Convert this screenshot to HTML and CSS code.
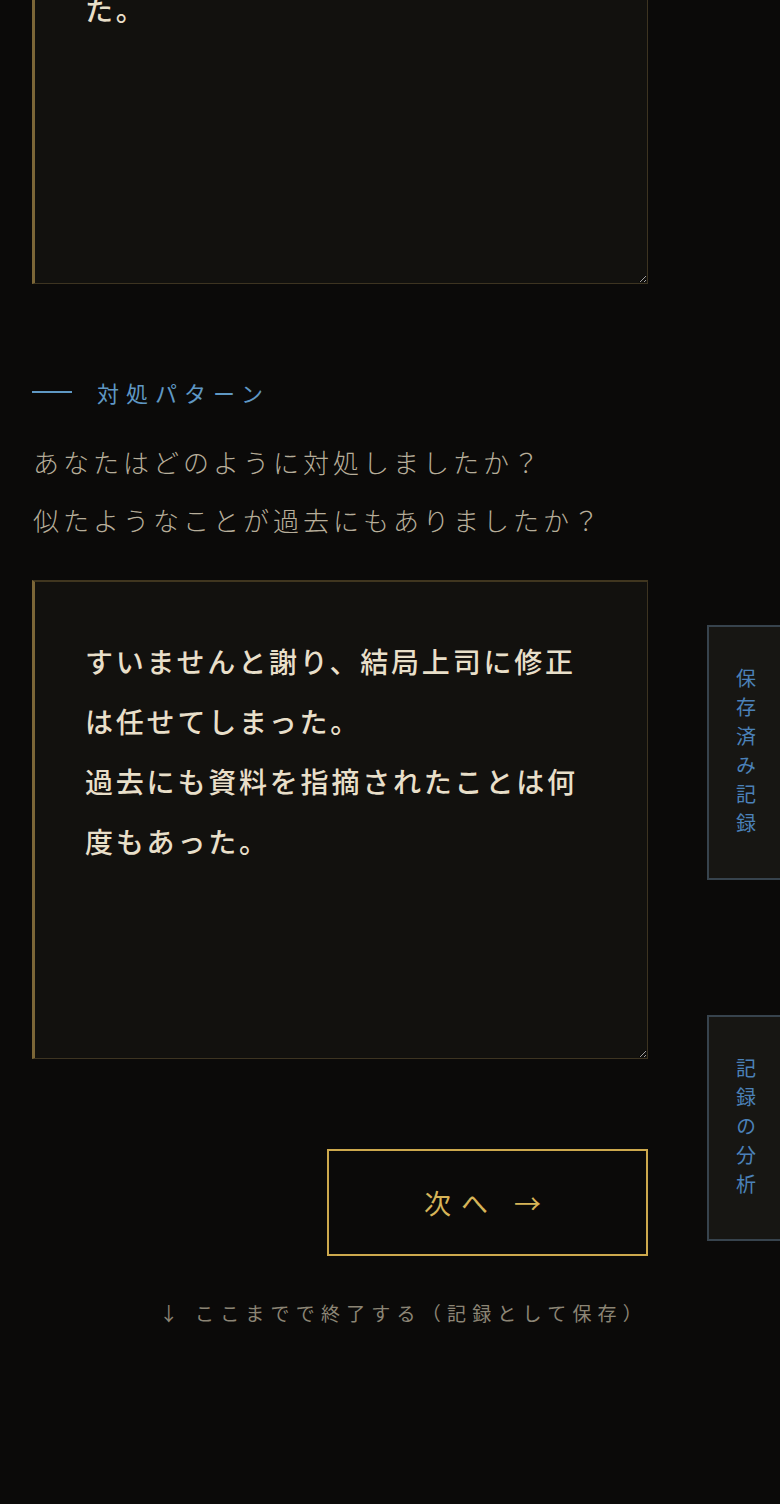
FILE: index.html
```html
<!DOCTYPE html>
<html lang="ja">
<head>
<meta charset="utf-8">
<title>記録</title>
<link rel="stylesheet" href="styles.css">
</head>
<body>
<main class="page">
  <textarea class="answer answer-prev">た。</textarea>

  <section class="step">
    <h2 class="step-label"><span class="step-rule"></span>対処パターン</h2>
    <p class="question">あなたはどのように対処しましたか？<br>似たようなことが過去にもありましたか？</p>
    <textarea class="answer answer-current">すいませんと謝り、結局上司に修正は任せてしまった。
過去にも資料を指摘されたことは何度もあった。</textarea>
  </section>

  <div class="actions">
    <button class="next-btn" type="button">次へ →</button>
    <a class="finish-link" href="#">↓ ここまでで終了する（記録として保存）</a>
  </div>
</main>

<nav class="side-tabs">
  <a class="side-tab tab-saved" href="#">保存済み記録</a>
  <a class="side-tab tab-analysis" href="#">記録の分析</a>
</nav>
</body>
</html>
```

FILE: styles.css
```css
* { box-sizing: border-box; }

html, body {
  margin: 0;
  padding: 0;
  background: #0b0a09;
}

body {
  font-family: "Noto Sans CJK JP", "Noto Sans", sans-serif;
  color: #e6dcc6;
  height: 1504px;
  overflow: hidden;
}

.page {
  width: 616px;
  margin-left: 32px;
  margin-top: -72px;
  display: flex;
  flex-direction: column;
}

.answer {
  display: block;
  width: 616px;
  background: #12110e;
  border: 1px solid #3d3421;
  border-left: 3px solid #7b6637;
  border-top-width: 2px;
  border-top-color: #40361f;
  padding: 49px 50px 40px 50px;
  font-family: "Noto Sans CJK JP", sans-serif;
  font-size: 28px;
  font-weight: 500;
  line-height: 60px;
  letter-spacing: 2.8px;
  color: #e8dfc9;
  resize: vertical;
  outline: none;
  overflow: hidden;
}

.answer-prev {
  height: 356px;
}

.step {
  margin-top: 92px;
  display: flex;
  flex-direction: column;
}

.step-label {
  margin: 0;
  display: flex;
  align-items: center;
  font-size: 22px;
  font-weight: 400;
  line-height: 32px;
  letter-spacing: 7px;
  color: #5f98c4;
}

.step-rule {
  display: inline-block;
  width: 40px;
  height: 2px;
  background: #5f98c4;
  margin-right: 25px;
}

.question {
  margin: 25px 0 0 1px;
  font-size: 26px;
  font-weight: 300;
  line-height: 58px;
  letter-spacing: 4px;
  color: #b7ae9a;
}

.answer-current {
  margin-top: 31px;
  height: 479px;
}

.actions {
  display: flex;
  flex-direction: column;
  align-items: flex-end;
}

.next-btn {
  margin-top: 90px;
  width: 321px;
  height: 107px;
  background: transparent;
  border: 2px solid #cda94d;
  color: #d6b458;
  font-family: "Noto Sans CJK JP", sans-serif;
  font-size: 27px;
  font-weight: 400;
  letter-spacing: 10px;
  padding: 0;
  cursor: pointer;
}

.finish-link {
  margin-top: 42px;
  font-size: 19px;
  line-height: 30px;
  letter-spacing: 6.2px;
  color: #8c8575;
  text-decoration: none;
}

.side-tabs {
  position: fixed;
  top: 0;
  right: 0;
}

.side-tab {
  position: fixed;
  right: -4px;
  width: 77px;
  display: flex;
  justify-content: center;
  align-items: center;
  background: #171613;
  border: 2px solid #37434d;
  writing-mode: vertical-rl;
  text-orientation: upright;
  font-size: 20px;
  line-height: 26px;
  letter-spacing: 9px;
  color: #4b81b8;
  text-decoration: none;
}

.tab-saved {
  top: 625px;
  height: 255px;
  padding-top: 4px;
}

.tab-analysis {
  top: 1015px;
  height: 226px;
  padding-top: 5px;
}
```
